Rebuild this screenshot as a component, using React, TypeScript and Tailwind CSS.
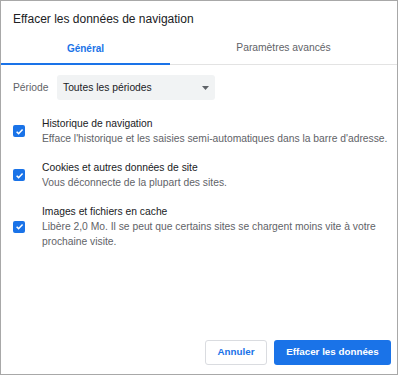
import React from "react";

function Check() {
  return (
    <div className="w-[12px] h-[12px] rounded-[2px] bg-[#1a73e8] flex items-center justify-center shrink-0">
      <svg width="9" height="9" viewBox="0 0 10 10">
        <path d="M1.8 5.2 L4 7.4 L8.4 2.8" fill="none" stroke="white" strokeWidth="1.7" />
      </svg>
    </div>
  );
}

function Item({ title, desc, wrap }: { title: string; desc: string; wrap?: boolean }) {
  return (
    <div className="flex items-center gap-[17px]">
      <Check />
      <div className="flex flex-col">
        <div className="text-[10.3px] leading-[15px] text-[#202124]">{title}</div>
        <div className={"text-[10.3px] leading-[15px] text-[#5f6368] " + (wrap ? "w-[340px]" : "whitespace-nowrap")}>{desc}</div>
      </div>
    </div>
  );
}

export default function App() {
  return (
    <div className="w-[400px] h-[376px] bg-white">
      <div
        className="w-[398px] h-[375px] bg-white border border-[#a8a8a8] flex flex-col"
        style={{ fontFamily: "'Liberation Sans', Arial, sans-serif" }}
      >
        <div className="pl-[12px] pt-[11px] text-[12px] leading-[15px] text-[#202124] h-[32px]">Effacer les données de navigation</div>
        <div className="flex h-[32px] border-b border-[#e3e3e3]">
          <div className="w-[169px] flex justify-center pt-[8px] text-[10px] leading-[15px] font-bold text-[#1a73e8] border-b-2 border-[#1a73e8] mb-[-1px]">Général</div>
          <div className="flex-1 flex justify-center pt-[7px] text-[10.3px] leading-[15px] text-[#5f6368]">Paramètres avancés</div>
        </div>
        <div className="flex items-center pl-[12px] mt-[10px]">
          <div className="text-[10.3px] text-[#5f6368] w-[44px]">Période</div>
          <div className="w-[158px] h-[25px] bg-[#f1f3f4] rounded-[3px] flex items-center justify-between pl-[6px] pr-[6px] text-[10.3px] text-[#202124]">
            <span>Toutes les périodes</span>
            <svg width="7" height="4" viewBox="0 0 7 4"><path d="M0 0 L7 0 L3.5 4 Z" fill="#5f6368" /></svg>
          </div>
        </div>
        <div className="flex flex-col gap-[14px] pl-[12px] mt-[16px]">
          <Item title="Historique de navigation" desc="Efface l'historique et les saisies semi-automatiques dans la barre d'adresse." />
          <Item title="Cookies et autres données de site" desc="Vous déconnecte de la plupart des sites." />
          <Item title="Images et fichiers en cache" desc="Libère 2,0 Mo. Il se peut que certains sites se chargent moins vite à votre prochaine visite." wrap />
        </div>
        <div className="flex-1" />
        <div className="flex justify-end gap-[7px] pr-[6px] pb-[9px]">
          <button className="h-[25px] w-[62px] rounded-[3px] border border-[#dadce0] text-[9.8px] font-bold text-[#1a73e8] bg-white">Annuler</button>
          <button className="h-[25px] w-[117px] rounded-[3px] bg-[#1a73e8] text-[9.8px] font-bold text-white">Effacer les données</button>
        </div>
      </div>
    </div>
  );
}
